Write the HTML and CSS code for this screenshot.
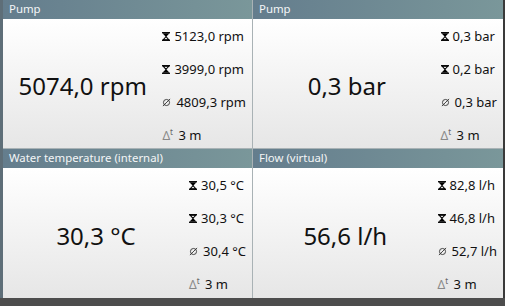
FILE: index.html
```html
<!DOCTYPE html>
<html lang="en">
<head>
    <meta charset="UTF-8">
    <title>Sensor Dashboard</title>
    <link rel="stylesheet" href="styles.css">
</head>
<body>
    <div class="dashboard">

        <!-- Pump speed -->
        <div class="tile">
            <div class="tile-header">Pump</div>
            <div class="tile-body">
                <div class="value">5074,0 rpm</div>
                <div class="stats">
                    <div class="stat"><svg class="ico" viewBox="0 0 9 10"><rect x="0" y="0" width="9" height="1.4"/><path d="M0.5 1.4 H8.5 L4.5 5.6 Z"/><path d="M4.5 5.2 L7.6 8.6 H1.4 Z" fill="none" stroke="#000" stroke-width="1.2"/><rect x="0" y="8.6" width="9" height="1.4"/></svg>5123,0 rpm</div>
                    <div class="stat"><svg class="ico" viewBox="0 0 9 10"><rect x="0" y="0" width="9" height="1.4"/><path d="M4.5 4.8 L1.4 1.4 H7.6 Z" fill="none" stroke="#000" stroke-width="1.2"/><path d="M0.5 8.6 H8.5 L4.5 4.4 Z"/><rect x="0" y="8.6" width="9" height="1.4"/></svg>3999,0 rpm</div>
                    <div class="stat"><svg class="avg" viewBox="0 0 10 10"><circle cx="5" cy="5" r="3.4"/><path d="M1 9 L9 1"/></svg>4809,3 rpm</div>
                    <div class="stat"><span class="dt">Δ<sup>t</sup></span>3 m</div>
                </div>
            </div>
        </div>

        <!-- Pump pressure -->
        <div class="tile">
            <div class="tile-header">Pump</div>
            <div class="tile-body">
                <div class="value">0,3 bar</div>
                <div class="stats">
                    <div class="stat"><svg class="ico" viewBox="0 0 9 10"><rect x="0" y="0" width="9" height="1.4"/><path d="M0.5 1.4 H8.5 L4.5 5.6 Z"/><path d="M4.5 5.2 L7.6 8.6 H1.4 Z" fill="none" stroke="#000" stroke-width="1.2"/><rect x="0" y="8.6" width="9" height="1.4"/></svg>0,3 bar</div>
                    <div class="stat"><svg class="ico" viewBox="0 0 9 10"><rect x="0" y="0" width="9" height="1.4"/><path d="M4.5 4.8 L1.4 1.4 H7.6 Z" fill="none" stroke="#000" stroke-width="1.2"/><path d="M0.5 8.6 H8.5 L4.5 4.4 Z"/><rect x="0" y="8.6" width="9" height="1.4"/></svg>0,2 bar</div>
                    <div class="stat"><svg class="avg" viewBox="0 0 10 10"><circle cx="5" cy="5" r="3.4"/><path d="M1 9 L9 1"/></svg>0,3 bar</div>
                    <div class="stat"><span class="dt">Δ<sup>t</sup></span>3 m</div>
                </div>
            </div>
        </div>

        <!-- Water temperature -->
        <div class="tile">
            <div class="tile-header">Water temperature (internal)</div>
            <div class="tile-body">
                <div class="value">30,3 °C</div>
                <div class="stats">
                    <div class="stat"><svg class="ico" viewBox="0 0 9 10"><rect x="0" y="0" width="9" height="1.4"/><path d="M0.5 1.4 H8.5 L4.5 5.6 Z"/><path d="M4.5 5.2 L7.6 8.6 H1.4 Z" fill="none" stroke="#000" stroke-width="1.2"/><rect x="0" y="8.6" width="9" height="1.4"/></svg>30,5 °C</div>
                    <div class="stat"><svg class="ico" viewBox="0 0 9 10"><rect x="0" y="0" width="9" height="1.4"/><path d="M4.5 4.8 L1.4 1.4 H7.6 Z" fill="none" stroke="#000" stroke-width="1.2"/><path d="M0.5 8.6 H8.5 L4.5 4.4 Z"/><rect x="0" y="8.6" width="9" height="1.4"/></svg>30,3 °C</div>
                    <div class="stat"><svg class="avg" viewBox="0 0 10 10"><circle cx="5" cy="5" r="3.4"/><path d="M1 9 L9 1"/></svg>30,4 °C</div>
                    <div class="stat"><span class="dt">Δ<sup>t</sup></span>3 m</div>
                </div>
            </div>
        </div>

        <!-- Flow -->
        <div class="tile">
            <div class="tile-header">Flow (virtual)</div>
            <div class="tile-body">
                <div class="value">56,6 l/h</div>
                <div class="stats">
                    <div class="stat"><svg class="ico" viewBox="0 0 9 10"><rect x="0" y="0" width="9" height="1.4"/><path d="M0.5 1.4 H8.5 L4.5 5.6 Z"/><path d="M4.5 5.2 L7.6 8.6 H1.4 Z" fill="none" stroke="#000" stroke-width="1.2"/><rect x="0" y="8.6" width="9" height="1.4"/></svg>82,8 l/h</div>
                    <div class="stat"><svg class="ico" viewBox="0 0 9 10"><rect x="0" y="0" width="9" height="1.4"/><path d="M4.5 4.8 L1.4 1.4 H7.6 Z" fill="none" stroke="#000" stroke-width="1.2"/><path d="M0.5 8.6 H8.5 L4.5 4.4 Z"/><rect x="0" y="8.6" width="9" height="1.4"/></svg>46,8 l/h</div>
                    <div class="stat"><svg class="avg" viewBox="0 0 10 10"><circle cx="5" cy="5" r="3.4"/><path d="M1 9 L9 1"/></svg>52,7 l/h</div>
                    <div class="stat"><span class="dt">Δ<sup>t</sup></span>3 m</div>
                </div>
            </div>
        </div>

    </div>
</body>
</html>
```

FILE: styles.css
```css
body {
    margin: 0;
    padding: 0;
    width: 505px;
    height: 306px;
    overflow: hidden;
    background-color: #4d4d4d;
    font-family: 'Noto Sans', 'Open Sans', sans-serif;
}

.dashboard {
    display: grid;
    grid-template-columns: 249px 250px;
    grid-template-rows: 148px 149px;
    gap: 1px;
    width: 500px;
    height: 298px;
    padding-left: 3px;
    border-right: 2px solid #3a3a3a;
    background-color: #a9b2b5;
    box-shadow: inset 3px 0 0 #5e6e78;
}

.tile {
    display: flex;
    flex-direction: column;
    min-width: 0;
}

.tile-header {
    height: 19px;
    line-height: 18px;
    padding-left: 6px;
    font-size: 11.4px;
    color: #f4f6f7;
    background: linear-gradient(to right, #647d8d, #7a979a);
    white-space: nowrap;
}

.tile-body {
    flex: 1;
    display: flex;
    align-items: stretch;
    background: linear-gradient(to bottom, #ffffff, #e6e6e6);
}

.value {
    flex: 1;
    display: flex;
    align-items: center;
    justify-content: center;
    font-size: 24px;
    color: #111;
    padding-top: 4px;
}

.stats {
    display: flex;
    flex-direction: column;
    gap: 15px;
    padding: 8px 6px 0 0;
}

.stat {
    display: flex;
    align-items: center;
    height: 18px;
    font-size: 13px;
    color: #111;
    white-space: nowrap;
}

.ico {
    width: 8px;
    height: 9px;
    margin-right: 4px;
}

.avg {
    width: 9px;
    height: 9px;
    margin-right: 5px;
    fill: none;
    stroke: #333;
    stroke-width: 1;
}

.dt {
    width: 14px;
    margin-right: 2px;
    font-size: 12px;
    color: #888;
}

.dt sup {
    font-size: 8px;
    color: #666;
}
```
